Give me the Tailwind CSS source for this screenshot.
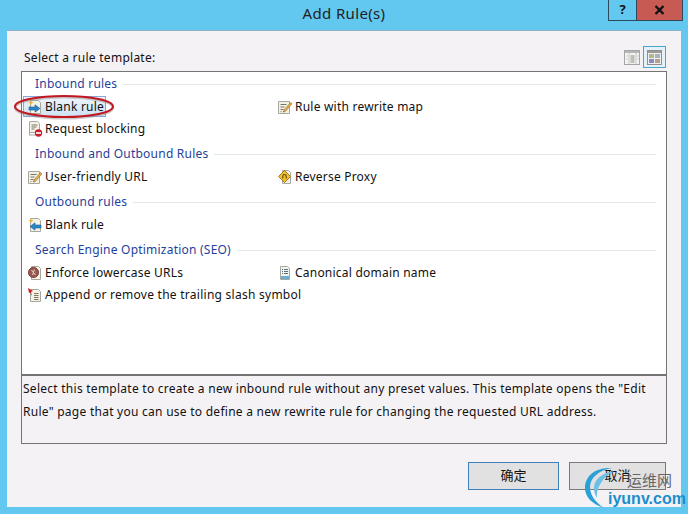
<!DOCTYPE html>
<html lang="en">
<head>
  <meta charset="UTF-8" />
  <title>Add Rule(s)</title>
  <script src="https://cdn.jsdelivr.net/npm/@tailwindcss/browser@4"></script>
</head>
<body class="m-0 overflow-hidden">
  <div class="relative w-[688px] h-[514px] bg-[#63c8f0] flex flex-col font-['Noto_Sans','Noto_Sans_CJK_SC',sans-serif] text-[12px] text-[#111]">
    <!-- title bar -->
    <div class="h-[30px] pb-[3px] flex items-center justify-center text-[15px] text-[#222] tracking-[0.35px]">Add Rule(s)</div>
    <div class="absolute top-0 left-[608px] flex h-[21px] border border-t-0 border-[#2c4a5c]">
      <div class="w-[28px] flex items-center justify-center font-bold text-[13px] text-[#111] border-r border-[#2c4a5c]">?</div>
      <div class="w-[45px] bg-[#c75a52] flex items-center justify-center">
        <svg width="11" height="10" viewBox="0 0 11 10"><path d="M1.500 1l8 8M9.500 1l-8 8" stroke="#111" stroke-width="2.400" fill="none"/></svg>
      </div>
    </div>

    <!-- client area -->
    <div class="ml-[7px] w-[674px] h-[477px] bg-[#f5f2f6] border-t border-[#8fb2c4] px-[14px] flex flex-col">
      <div class="h-[40px] flex items-end justify-between pb-[1px]">
        <div class="pb-[3px] pl-[3px] tracking-[0.26px] leading-[18px]">Select a rule template:</div>
        <div class="flex items-center gap-[3px] mr-[1px] mb-[2px]">
          <svg width="16" height="15" viewBox="0 0 16 15"><rect x=".5" y=".5" width="15" height="14" fill="#f3f3f3" stroke="#a5a5a5"/><rect x="1" y="1" width="14" height="2" fill="#b5b5b5"/><path d="M5 3v11M12 3v11" stroke="#c4c4c4"/><path d="M6.500 6h4M6.500 8h4M6.500 10h4M6.500 12h4" stroke="#8a8a70"/><path d="M2 6h2M2 9h2M13 6h2M13 9h2" stroke="#d0d0d0"/></svg>
          <div class="w-[23px] h-[22px] bg-[#e3f1f8] border border-[#4aa6c8] flex items-center justify-center">
            <svg width="15" height="15" viewBox="0 0 15 15"><rect x=".5" y=".5" width="14" height="14" fill="#efefef" stroke="#8f8f8f"/><rect x="1" y="1" width="13" height="2" fill="#9a9a9a"/><rect x="2" y="4" width="5" height="4" fill="#b5b68a"/><rect x="8" y="4" width="5" height="4" fill="#a9b2b8"/><rect x="2" y="9" width="5" height="4" fill="#8d8ac0"/><rect x="8" y="9" width="5" height="4" fill="#b89f8c"/></svg>
          </div>
        </div>
      </div>

      <!-- template list -->
      <div class="w-[646px] h-[305px] bg-white border border-b-2 border-[#747474] flex flex-col gap-[2px] tracking-[0.22px]">
        <section>
          <div class="h-[24px] flex items-center gap-[6px] pl-[13px] pr-[10px] text-[#1f3f9a]"><span>Inbound rules</span><div class="flex-1 h-px bg-[#e2e8ee]"></div></div>
          <div class="grid grid-cols-[250px_1fr] auto-rows-[22px] pl-[5px]">
            <div class="flex items-center gap-[2px] w-[83px] -ml-[4px] pl-[3px] border border-[#8aa6d8] bg-gradient-to-b from-[#eef5fb] to-[#cfe2f3] h-[21px] whitespace-nowrap">
              <svg width="16" height="16" viewBox="0 0 16 16"><path d="M3.500 1.500h8l2 2v11h-10z" fill="#f6f3e6" stroke="#a8a8a0"/><path d="M4 1l.8 2 2 .8-2 .8L4 6.500l-.8-1.900-2-.8 2-.8z" fill="#f2b632"/><path d="M2 8h6V5.800l5 3.700-5 3.700V11H2z" fill="#2b87c8" stroke="#1c5f96" stroke-width=".6"/></svg>
              <span>Blank rule</span>
            </div>
            <div class="flex items-center gap-[2px]">
              <svg width="16" height="16" viewBox="0 0 16 16"><path d="M1.500 2.500h11v12h-11z" fill="#f4f1e4" stroke="#a8a8a0"/><path d="M3.500 5.500h6M3.500 8h4M3.500 10.500h3M3.500 12.700h1M6 12.700h1" stroke="#77776a"/><path d="M7 11l6.500-7.500 1.500 1.300L8.500 12.300 6.500 13z" fill="#e6b04a" stroke="#8a6a2a" stroke-width=".6"/></svg>
              <span>Rule with rewrite map</span>
            </div>
            <div class="flex items-center gap-[2px]">
              <svg width="16" height="16" viewBox="0 0 16 16"><path d="M2.500 .500h8l2 2v9h-10v3" fill="#f6f3e6" stroke="#a8a8a0"/><path d="M2.500 1v13h6" fill="none" stroke="#a8a8a0"/><path d="M4.500 4h6M4.500 6h5M4.500 8h3" stroke="#77776a"/><circle cx="11.500" cy="12" r="3.700" fill="#c8202a"/><rect x="9" y="11.200" width="5" height="1.600" fill="#fff"/></svg>
              <span>Request blocking</span>
            </div>
          </div>
        </section>

        <section>
          <div class="h-[24px] flex items-center gap-[6px] pl-[13px] pr-[10px] text-[#1f3f9a]"><span>Inbound and Outbound Rules</span><div class="flex-1 h-px bg-[#e2e8ee]"></div></div>
          <div class="grid grid-cols-[250px_1fr] auto-rows-[22px] pl-[5px]">
            <div class="flex items-center gap-[2px]">
              <svg width="16" height="16" viewBox="0 0 16 16"><path d="M1.500 2.500h11v12h-11z" fill="#f4f1e4" stroke="#a8a8a0"/><path d="M3.500 5.500h6M3.500 8h4M3.500 10.500h3M3.500 12.700h1M6 12.700h1" stroke="#77776a"/><path d="M7 11l6.500-7.500 1.500 1.300L8.500 12.300 6.500 13z" fill="#e6b04a" stroke="#8a6a2a" stroke-width=".6"/></svg>
              <span>User-friendly URL</span>
            </div>
            <div class="flex items-center gap-[2px]">
              <svg width="16" height="16" viewBox="0 0 16 16"><path d="M5.500 1.500h6l2 2v11h-8z" fill="#f6f3e6" stroke="#a8a8a0"/><path d="M7.500 1.500l6 6-6 6-6-6z" fill="#efc032" stroke="#a67c1a"/><path d="M5.800 9.500V7.200a1.700 1.700 0 0 1 3.400 0v2.300" fill="none" stroke="#5f4408" stroke-width="1.100"/></svg>
              <span>Reverse Proxy</span>
            </div>
          </div>
        </section>

        <section>
          <div class="h-[24px] flex items-center gap-[6px] pl-[13px] pr-[10px] text-[#1f3f9a]"><span>Outbound rules</span><div class="flex-1 h-px bg-[#e2e8ee]"></div></div>
          <div class="grid grid-cols-[250px_1fr] auto-rows-[22px] pl-[5px]">
            <div class="flex items-center gap-[2px]">
              <svg width="16" height="16" viewBox="0 0 16 16"><path d="M3.500 1.500h8l2 2v11h-10z" fill="#f6f3e6" stroke="#a8a8a0"/><path d="M4 1l.8 2 2 .8-2 .8L4 6.500l-.8-1.900-2-.8 2-.8z" fill="#f2b632"/><path d="M14 8H8V5.800L3 9.500l5 3.700V11h6z" fill="#2b87c8" stroke="#1c5f96" stroke-width=".6"/></svg>
              <span>Blank rule</span>
            </div>
          </div>
        </section>

        <section>
          <div class="h-[24px] flex items-center gap-[6px] pl-[13px] pr-[10px] text-[#1f3f9a]"><span>Search Engine Optimization (SEO)</span><div class="flex-1 h-px bg-[#e2e8ee]"></div></div>
          <div class="grid grid-cols-[250px_1fr] auto-rows-[22px] pl-[5px]">
            <div class="flex items-center gap-[2px]">
              <svg width="16" height="16" viewBox="0 0 16 16"><path d="M4.500 1.500h7l2 2v11h-9z" fill="#f6f3e6" stroke="#a8a8a0"/><circle cx="6.500" cy="7.500" r="5" fill="#9a5a50" stroke="#6e3a34"/><path d="M4.500 5l4 5M7.500 4.500L5.500 10" stroke="#e8d8d0"/></svg>
              <span>Enforce lowercase URLs</span>
            </div>
            <div class="flex items-center gap-[2px]">
              <svg width="16" height="16" viewBox="0 0 16 16"><path d="M3.500 1.500h7l2 2v11h-9z" fill="#f4f4ee" stroke="#a8a8a0"/><rect x="4" y="11" width="8" height="3" fill="#6aaed8"/><path d="M5 4.500h1M7 4.500h4M5 6.500h1M7 6.500h4M5 8.500h1M7 8.500h4" stroke="#5f6f7a"/></svg>
              <span>Canonical domain name</span>
            </div>
            <div class="flex items-center gap-[2px] col-span-2 tracking-[0.26px]">
              <svg width="16" height="16" viewBox="0 0 16 16"><path d="M3.500 2.500h8l2 2v10h-10z" fill="#f6f3e6" stroke="#a8a8a0"/><path d="M7 6.500h4.500M7 8.500h4.500M7 10.500h4.500M7 12.500h4.500" stroke="#77776a"/><path d="M1 1l5 3-2 1 1 4-2-3.500-1 .5z" fill="#c8202a"/></svg>
              <span>Append or remove the trailing slash symbol</span>
            </div>
          </div>
        </section>
      </div>

      <!-- description -->
      <div class="w-[646px] h-[68px] border border-t-0 border-[#747474] pl-[1px] pr-[4px] leading-[23px] pt-[1px] tracking-[0.26px]">
        Select this template to create a new inbound rule without any preset values. This template opens the "Edit<br />Rule" page that you can use to define a new rewrite rule for changing the requested URL address.
      </div>

      <!-- buttons -->
      <div class="flex justify-end gap-[10px] mt-[18px] w-[645px] text-[13px]">
        <button class="w-[91px] h-[28px] bg-[#e1e1e1] border border-[#3f7fb8]">确定</button>
        <button class="w-[97px] h-[28px] bg-[#e1e1e1] border border-[#7a7a7a]">取消</button>
      </div>
    </div>

    <!-- red annotation -->
    <svg class="absolute left-[12px] top-[92px]" width="106" height="30" viewBox="0 0 106 30"><ellipse cx="52" cy="16" rx="49" ry="10.500" fill="none" stroke="#8a8a8a" stroke-opacity=".45" stroke-width="2"/><ellipse cx="52" cy="14.500" rx="49" ry="10.500" fill="none" stroke="#c4161f" stroke-width="2"/></svg>

    <!-- watermark -->
    <div class="absolute left-[584px] top-[465px] w-[104px] h-[49px]">
      <svg class="absolute left-0 top-0" width="42" height="46" viewBox="0 0 42 46"><path d="M28 3C10 2 1 12 1 23c0 9 7 16 19 20C11 37 6 30 6 22 6 13 15 5 28 3z" fill="#2c9fd6"/><path d="M30 6C18 8 10 14 10 23c0 4 1 7 3 10C12 24 18 12 30 6z" fill="#6cc0e8"/></svg>
      <div class="absolute left-[43px] top-[5px] text-[15px] leading-[20px] whitespace-nowrap text-[#666] font-['Noto_Sans_CJK_SC',sans-serif]">运维网</div>
      <div class="absolute left-[24px] top-[25px] text-[16px] font-bold text-[#1a8ecb] font-['Liberation_Sans',sans-serif] leading-[18px] whitespace-nowrap">iyunv.com</div>
    </div>
  </div>
</body>
</html>
